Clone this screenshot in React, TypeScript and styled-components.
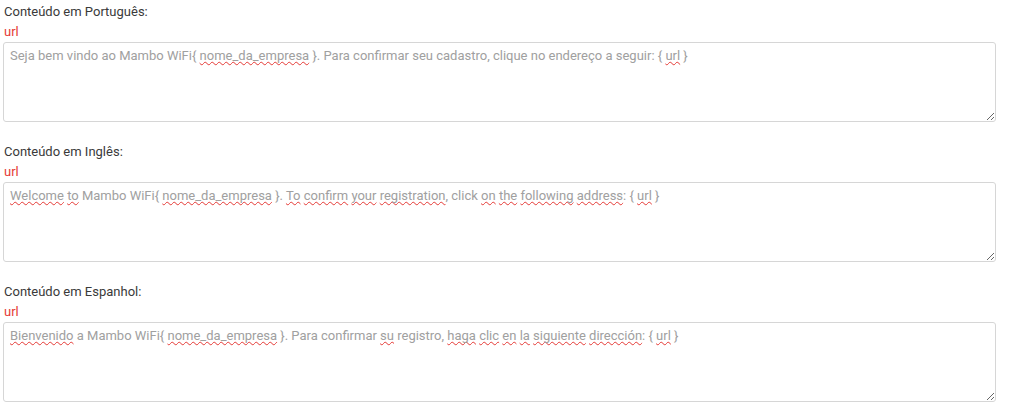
import React from 'react';
import styled, { createGlobalStyle } from 'styled-components';

const GlobalStyle = createGlobalStyle`
  body {
    margin: 0;
    background: #fff;
    font-family: Roboto, 'Liberation Sans', sans-serif;
  }
`;

const Page = styled.div`
  display: flex;
  flex-direction: column;
  gap: 20px;
  padding: 2px 14px 0 3px;
`;

const Group = styled.section`
  display: flex;
  flex-direction: column;
`;

const Label = styled.label`
  font-size: 13px;
  line-height: 20px;
  color: #3a3a3a;
  padding-left: 1px;
`;

const Tag = styled.span`
  font-size: 13px;
  line-height: 20px;
  font-weight: 400;
  color: #e53935;
  padding-left: 1px;
`;

const Field = styled.div`
  box-sizing: border-box;
  height: 80px;
  border: 1px solid #d6d6d6;
  border-radius: 3px;
  padding: 4px 6px;
  font-size: 13px;
  line-height: 18px;
  color: #a0a0a0;
  resize: vertical;
  overflow: auto;
`;

const Typo = styled.span`
  text-decoration: underline wavy #e53935;
  text-decoration-thickness: 1px;
  text-underline-offset: 1px;
  text-decoration-skip-ink: none;
`;

type Part = string | { w: string };

const sections: { label: string; parts: Part[] }[] = [
  {
    label: 'Conteúdo em Português:',
    parts: [
      'Seja bem vindo ao Mambo WiFi{ ',
      { w: 'nome_da_empresa' },
      ' }. Para confirmar seu cadastro, clique no endereço a seguir: { ',
      { w: 'url' },
      ' }',
    ],
  },
  {
    label: 'Conteúdo em Inglês:',
    parts: [
      { w: 'Welcome' },
      ' ',
      { w: 'to' },
      ' Mambo WiFi{ ',
      { w: 'nome_da_empresa' },
      ' }. ',
      { w: 'To' },
      ' ',
      { w: 'confirm' },
      ' ',
      { w: 'your' },
      ' ',
      { w: 'registration' },
      ', click ',
      { w: 'on' },
      ' ',
      { w: 'the' },
      ' ',
      { w: 'following' },
      ' ',
      { w: 'address' },
      ': { ',
      { w: 'url' },
      ' }',
    ],
  },
  {
    label: 'Conteúdo em Espanhol:',
    parts: [
      { w: 'Bienvenido' },
      ' a Mambo WiFi{ ',
      { w: 'nome_da_empresa' },
      ' }. Para confirmar ',
      { w: 'su' },
      ' registro, ',
      { w: 'haga' },
      ' ',
      { w: 'clic' },
      ' ',
      { w: 'en' },
      ' ',
      { w: 'la' },
      ' ',
      { w: 'siguiente' },
      ' ',
      { w: 'dirección' },
      ': { ',
      { w: 'url' },
      ' }',
    ],
  },
];

export default function App() {
  return (
    <>
      <GlobalStyle />
      <Page>
        {sections.map((s) => (
          <Group key={s.label}>
            <Label>{s.label}</Label>
            <Tag>url</Tag>
            <Field>
              {s.parts.map((p, i) =>
                typeof p === 'string' ? p : <Typo key={i}>{p.w}</Typo>
              )}
            </Field>
          </Group>
        ))}
      </Page>
    </>
  );
}
